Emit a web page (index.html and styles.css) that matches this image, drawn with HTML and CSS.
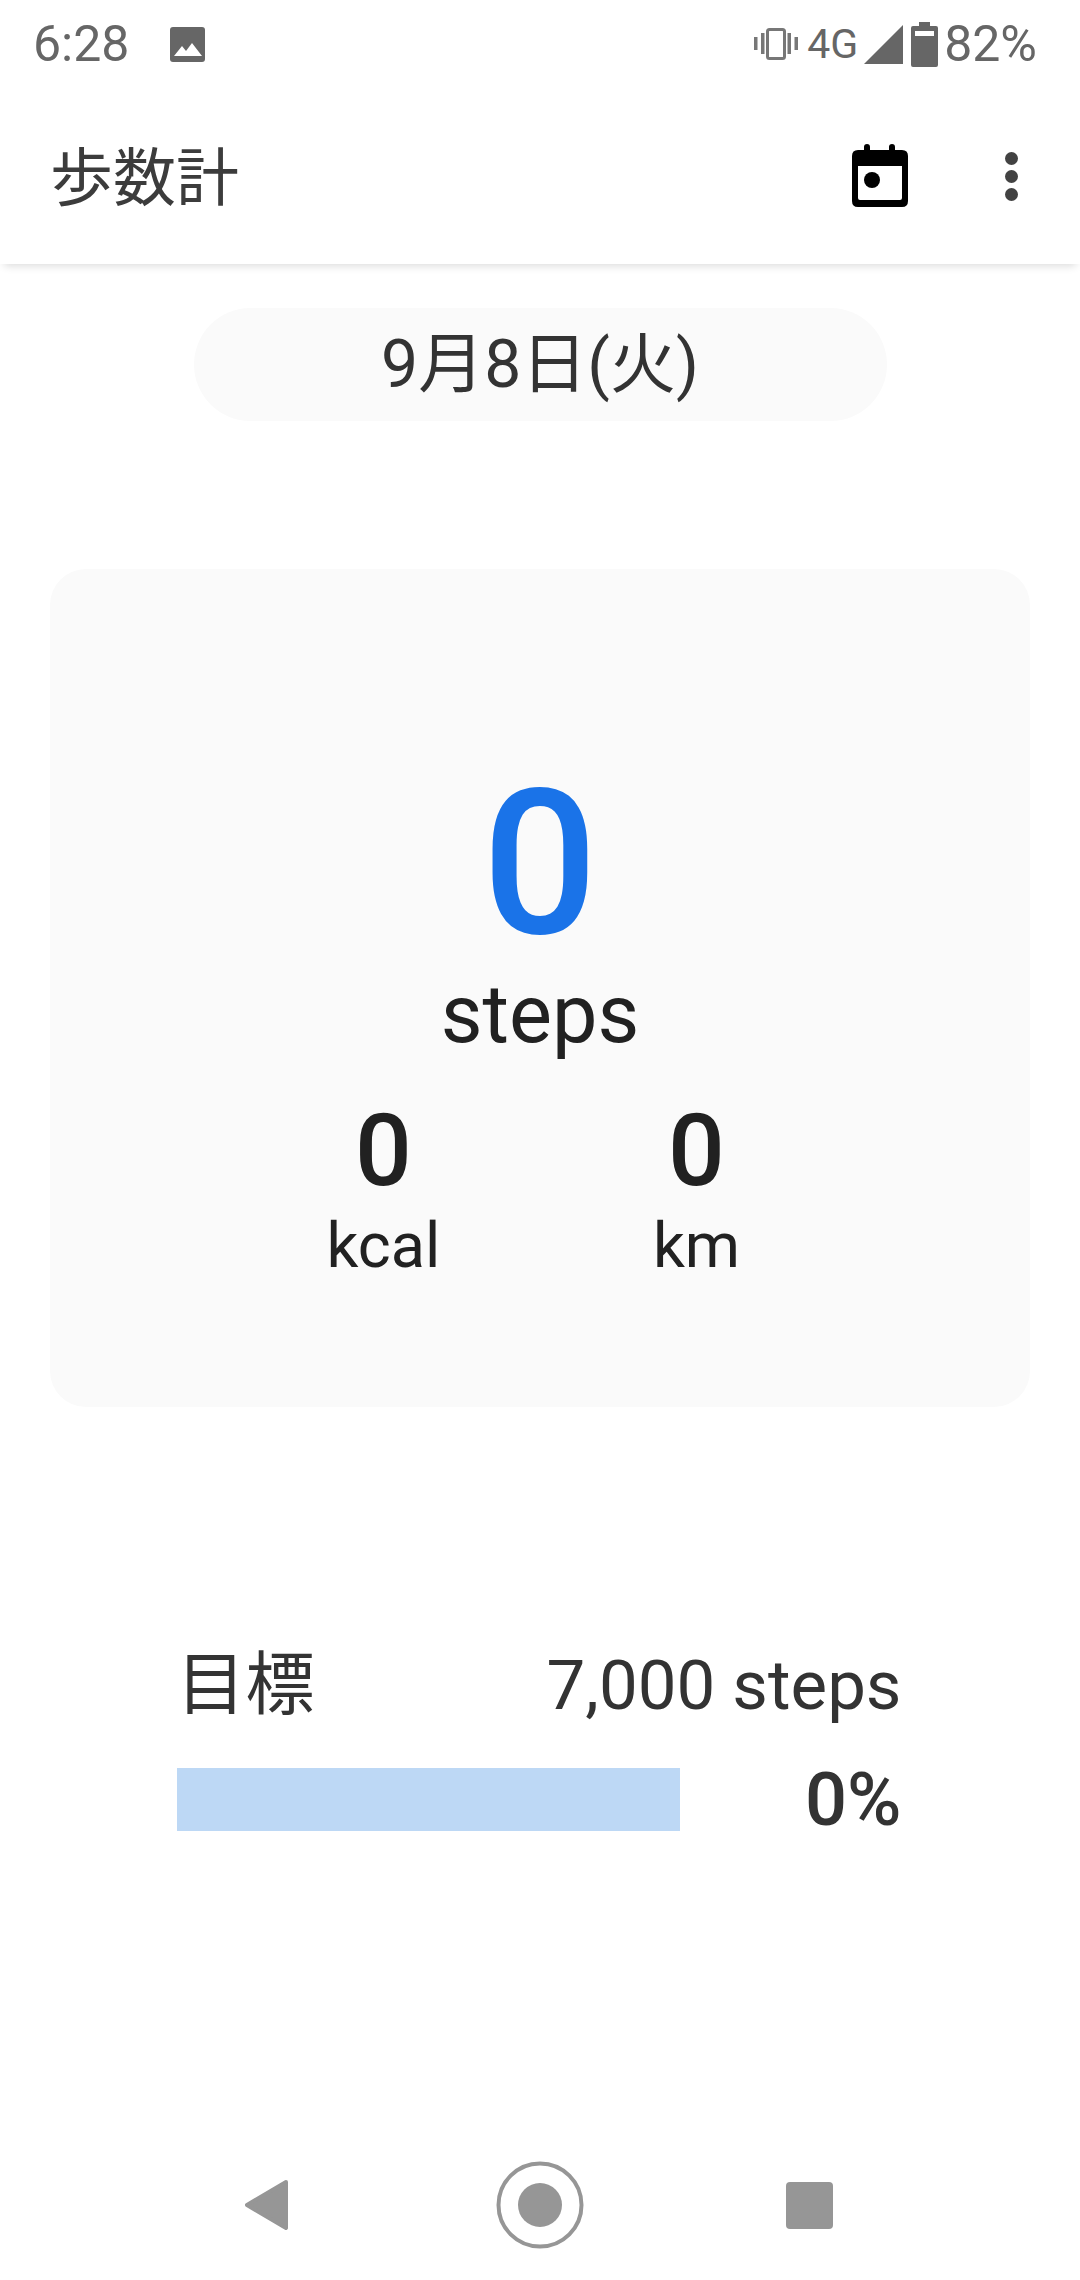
FILE: index.html
```html
<!DOCTYPE html>
<html lang="ja">
<head>
    <meta charset="UTF-8">
    <meta name="viewport" content="width=device-width, initial-scale=1.0">
    <title>歩数計</title>
    <link rel="stylesheet" href="styles.css">
</head>
<body>
    <div class="status-bar">
        <div class="status-left">
            <span class="status-time">6:28</span>
            <svg class="icon-image" viewBox="0 0 35 35">
                <rect width="35" height="35" rx="3" fill="#666"/>
                <path d="M4 29 L12 19 L16 24 L22 16 L32 29 Z" fill="#fff"/>
            </svg>
        </div>
        <div class="status-right">
            <svg class="icon-vibrate" viewBox="0 0 44 32">
                <rect x="0" y="9" width="3.5" height="13" fill="#777"/>
                <rect x="7" y="5" width="3.5" height="21" fill="#777"/>
                <rect x="13.5" y="1.5" width="17" height="29" rx="2" fill="none" stroke="#777" stroke-width="3"/>
                <rect x="33.5" y="5" width="3.5" height="21" fill="#777"/>
                <rect x="40.5" y="9" width="3.5" height="13" fill="#777"/>
            </svg>
            <span class="status-net">4G</span>
            <svg class="icon-signal" viewBox="0 0 39 39">
                <path d="M0 39 L39 0 V39 Z" fill="#666"/>
            </svg>
            <svg class="icon-battery" viewBox="0 0 27 45">
                <path d="M8 0 H19 V4 H25 Q27 4 27 6 V43 Q27 45 25 45 H2 Q0 45 0 43 V6 Q0 4 2 4 H8 Z" fill="#666"/>
                <rect x="4" y="9" width="19" height="5" fill="#fff"/>
            </svg>
            <span class="status-battery">82%</span>
        </div>
    </div>

    <header class="app-bar">
        <h1 class="app-title">歩数計</h1>
        <svg class="icon-calendar" viewBox="0 0 56 63">
            <path d="M12 6 V3 a3 3 0 0 1 6 0 V6 H37 V3 a3 3 0 0 1 6 0 V6 H50 Q56 6 56 12 V57 Q56 63 50 63 H6 Q0 63 0 57 V12 Q0 6 6 6 Z M6 22 V54 Q6 56 8 56 H48 Q50 56 50 54 V22 Z" fill="#000" fill-rule="evenodd"/>
            <circle cx="20" cy="36" r="8" fill="#000"/>
        </svg>
        <div class="menu-dots">
            <span></span>
            <span></span>
            <span></span>
        </div>
    </header>

    <main class="content">
        <div class="date-pill">9月8日(火)</div>

        <section class="summary-card">
            <div class="steps-count">0</div>
            <div class="steps-label">steps</div>
            <div class="stats">
                <div class="stat">
                    <div class="stat-value">0</div>
                    <div class="stat-label">kcal</div>
                </div>
                <div class="stat">
                    <div class="stat-value">0</div>
                    <div class="stat-label">km</div>
                </div>
            </div>
        </section>

        <section class="goal">
            <div class="goal-row">
                <span class="goal-title">目標</span>
                <span>7,000 steps</span>
            </div>
            <div class="goal-row goal-progress">
                <div class="progress-bar"></div>
                <span class="progress-percent">0%</span>
            </div>
        </section>
    </main>

    <nav class="nav-bar">
        <svg class="nav-back" viewBox="0 0 44 50">
            <path d="M41 2 L2 25 L41 48 Z" fill="#969696" stroke="#969696" stroke-width="4" stroke-linejoin="round"/>
        </svg>
        <svg class="nav-home" viewBox="0 0 88 88">
            <circle cx="44" cy="44" r="41.5" fill="none" stroke="#969696" stroke-width="4"/>
            <circle cx="44" cy="44" r="22" fill="#969696"/>
        </svg>
        <div class="nav-recent"></div>
    </nav>
</body>
</html>
```

FILE: styles.css
```css
* {
    box-sizing: border-box;
}

body {
    font-family: Roboto, "Noto Sans CJK JP", sans-serif;
    background-color: #fff;
    margin: 0;
    padding: 0;
    width: 1080px;
    height: 2280px;
    display: flex;
    flex-direction: column;
    overflow: hidden;
}

.status-bar {
    height: 84px;
    padding: 20px 43px 0 33px;
    display: flex;
    justify-content: space-between;
    align-items: flex-start;
    color: #666;
    font-size: 50px;
    line-height: 48px;
}

.status-left {
    display: flex;
    align-items: center;
    gap: 41px;
}

.icon-image {
    width: 35px;
    height: 35px;
}

.status-right {
    display: flex;
    align-items: center;
}

.icon-vibrate {
    width: 44px;
    height: 32px;
}

.status-net {
    font-size: 41px;
    margin-left: 9px;
}

.icon-signal {
    width: 39px;
    height: 39px;
    margin-left: 6px;
}

.icon-battery {
    width: 27px;
    height: 45px;
    margin-left: 8px;
}

.status-battery {
    margin-left: 6px;
}

.app-bar {
    height: 180px;
    padding: 0 62px 0 50px;
    display: flex;
    align-items: center;
    background-color: #fff;
    box-shadow: 0 6px 8px -4px rgba(0, 0, 0, 0.14);
    position: relative;
}

.app-title {
    margin: 8px auto 0 0;
    font-size: 63px;
    font-weight: 400;
    line-height: 1;
    color: #3c3c3c;
}

.icon-calendar {
    width: 56px;
    height: 63px;
    margin-top: 2px;
}

.menu-dots {
    margin-left: 97px;
    margin-top: 4px;
    display: flex;
    flex-direction: column;
    gap: 5px;
}

.menu-dots span {
    width: 13px;
    height: 13px;
    border-radius: 50%;
    background-color: #424242;
}

.content {
    flex: 1;
    display: flex;
    flex-direction: column;
    align-items: center;
}

.date-pill {
    margin-top: 44px;
    width: 693px;
    height: 113px;
    padding-bottom: 14px;
    border-radius: 57px;
    background-color: #fafafa;
    display: flex;
    align-items: center;
    justify-content: center;
    font-size: 66px;
    color: #333;
}

.summary-card {
    margin-top: 148px;
    width: 980px;
    height: 838px;
    padding-top: 194px;
    border-radius: 36px;
    background-color: #fafafa;
    display: flex;
    flex-direction: column;
    align-items: center;
    color: #212121;
}

.steps-count {
    font-size: 203px;
    font-weight: 500;
    line-height: 203px;
    color: #1a73e8;
}

.steps-label {
    margin-top: 8px;
    font-size: 81px;
    line-height: 81px;
}

.stats {
    margin-top: 46px;
    display: grid;
    grid-template-columns: 313px 313px;
    text-align: center;
}

.stat-value {
    font-size: 100px;
    font-weight: 500;
    line-height: 100px;
}

.stat-label {
    margin-top: 13px;
    font-size: 63px;
    line-height: 63px;
}

.goal {
    margin-top: 244px;
    margin-right: 2px;
    width: 725px;
    color: #333;
    font-size: 69px;
    line-height: 69px;
}

.goal-row {
    display: flex;
    justify-content: space-between;
    align-items: center;
}

.goal-progress {
    margin-top: 45px;
}

.progress-bar {
    width: 503px;
    height: 63px;
    background-color: #bdd8f5;
}

.progress-percent {
    font-size: 74px;
    font-weight: 500;
}

.nav-bar {
    height: 150px;
    display: flex;
    align-items: center;
    padding-left: 245px;
}

.nav-back {
    width: 44px;
    height: 50px;
}

.nav-home {
    width: 88px;
    height: 88px;
    margin-left: 207px;
}

.nav-recent {
    width: 47px;
    height: 47px;
    margin-left: 202px;
    border-radius: 4px;
    background-color: #969696;
}
```
